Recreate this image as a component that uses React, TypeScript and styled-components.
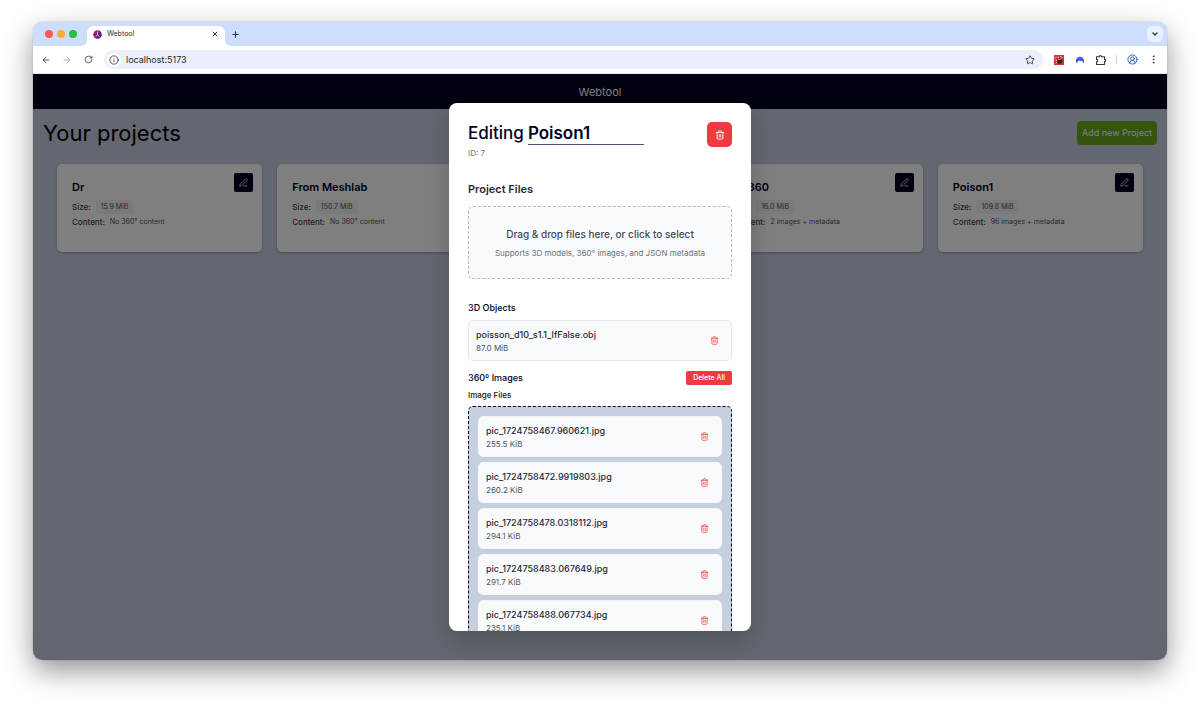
import React from 'react';
import styled, { createGlobalStyle } from 'styled-components';
import {
  ArrowLeft,
  ArrowRight,
  ChevronDown,
  CircleUserRound,
  EllipsisVertical,
  Info,
  PenLine,
  Plus,
  RotateCw,
  Star,
  Trash2,
  X,
} from 'lucide-react';

const navy = '#000122';
const slate = '#c6cfde';
const red = '#ef3b3f';

const GlobalStyle = createGlobalStyle`
  *, *::before, *::after { box-sizing: border-box; }
  body {
    margin: 0;
    background: #fff;
    color: #1f2937;
    font-family: Inter, "Liberation Sans", sans-serif;
  }
  button, input { font-family: inherit; }
  h1, h2, h3, h4, p, ul, dl, dd { margin: 0; padding: 0; }
  ul { list-style: none; }
`;

/* Browser window */

const Desktop = styled.div`
  display: flex;
  min-height: 100vh;
  padding: 22px 33px 44px;
`;

const BrowserWindow = styled.div`
  flex: 1;
  min-width: 0;
  display: flex;
  flex-direction: column;
  overflow: hidden;
  border-radius: 9px;
  background: #fff;
  box-shadow: 0 0 1px rgba(0, 0, 0, 0.5), 0 11px 28px rgba(0, 0, 0, 0.42);
`;

const TabStrip = styled.div`
  display: flex;
  align-items: center;
  height: 24px;
  padding: 0 4px 0 12px;
  background: #ccddfe;
`;

const TrafficLights = styled.div`
  display: flex;
  gap: 4px;
  margin-right: 10px;
`;

const Light = styled.span<{ $color: string }>`
  width: 8px;
  height: 8px;
  border-radius: 50%;
  background: ${(p) => p.$color};
`;

const Tab = styled.div`
  position: relative;
  align-self: flex-end;
  display: flex;
  align-items: center;
  gap: 5px;
  width: 138px;
  height: 20px;
  padding: 0 6px 4px;
  border-radius: 7px 7px 0 0;
  background: #fff;

  &::before,
  &::after {
    content: '';
    position: absolute;
    bottom: 0;
    width: 6px;
    height: 6px;
  }
  &::before {
    right: 100%;
    background: radial-gradient(circle at 0 0, transparent 6px, #fff 6px);
  }
  &::after {
    left: 100%;
    background: radial-gradient(circle at 100% 0, transparent 6px, #fff 6px);
  }
`;

const TabTitle = styled.span`
  flex: 1;
  font-size: 7px;
  line-height: 10px;
  color: #26282c;
`;

const ChromeButton = styled.button<{ $size?: number; $tint?: string }>`
  display: inline-flex;
  align-items: center;
  justify-content: center;
  flex: none;
  width: ${(p) => p.$size ?? 12}px;
  height: ${(p) => p.$size ?? 12}px;
  padding: 0;
  border: 0;
  border-radius: 5px;
  background: ${(p) => p.$tint ?? 'transparent'};
  color: #33363b;
`;

const NewTab = styled(ChromeButton)`
  margin-left: 4px;
  margin-right: auto;
`;

const Toolbar = styled.div`
  display: flex;
  align-items: center;
  gap: 10px;
  height: 28px;
  padding: 0 8px 0 7px;
  border-bottom: 1px solid #e3e8f0;
  background: #fff;
`;

const ToolbarGroup = styled.div`
  display: flex;
  align-items: center;
  gap: 9px;
`;

const AddressBar = styled.div`
  flex: 1;
  display: flex;
  align-items: center;
  gap: 5px;
  height: 19px;
  padding: 0 7px 0 3px;
  border-radius: 10px;
  background: #eaeffb;
`;

const SiteInfo = styled(ChromeButton)`
  border-radius: 50%;
`;

const Address = styled.input`
  flex: 1;
  min-width: 0;
  padding: 0;
  border: 0;
  outline: 0;
  background: transparent;
  color: #26282c;
  font-size: 9px;
  line-height: 12px;
`;

const Divider = styled.span`
  width: 1px;
  height: 9px;
  background: #c3d7f7;
`;

/* Page */

const Viewport = styled.div`
  position: relative;
  flex: 1;
  display: flex;
  flex-direction: column;
  background: ${slate};
`;

const SiteHeader = styled.header`
  display: flex;
  align-items: center;
  justify-content: center;
  height: 35px;
  background: ${navy};
`;

const SiteLink = styled.a`
  color: #fff;
  font-size: 11px;
  line-height: 16px;
  text-decoration: none;
`;

const Main = styled.main`
  padding: 12px 10px;
`;

const PageBar = styled.div`
  display: flex;
  align-items: center;
  justify-content: space-between;
  margin-bottom: 19px;
`;

const PageTitle = styled.h1`
  font-size: 22px;
  font-weight: 400;
  line-height: 24px;
  color: #000;
`;

const AddButton = styled.button`
  height: 24px;
  padding: 0 5px;
  border: 0;
  border-radius: 4px;
  background: #6aa81c;
  color: #fff;
  font-size: 9px;
  line-height: 14px;
`;

const ProjectGrid = styled.ul`
  display: grid;
  grid-template-columns: repeat(5, minmax(0, 1fr));
  gap: 15px;
  padding: 0 14px;
`;

const Card = styled.li`
  display: flex;
  align-items: flex-start;
  justify-content: space-between;
  height: 88px;
  padding: 9px 9px 9px 15px;
  border-radius: 5px;
  background: #fff;
  box-shadow: 0 1px 3px rgba(0, 0, 0, 0.25);
`;

const CardTitle = styled.h2`
  margin: 6px 0 5px;
  color: ${navy};
  font-size: 11px;
  font-weight: 600;
  line-height: 16px;
`;

const Fact = styled.div`
  display: flex;
  align-items: center;
  gap: 5px;
  height: 13px;
  margin-bottom: 2px;
  font-size: 8px;
  line-height: 12px;
  white-space: nowrap;
`;

const FactLabel = styled.dt`
  color: #374151;
  font-weight: 500;
`;

const FactValue = styled.dd<{ $badge?: boolean }>`
  padding: ${(p) => (p.$badge ? '1px 5px' : '0')};
  border-radius: 3px;
  background: ${(p) => (p.$badge ? '#f3f4f6' : 'transparent')};
  color: #4b5563;
  font-size: 7px;
`;

const EditButton = styled.button`
  display: flex;
  align-items: center;
  justify-content: center;
  width: 19px;
  height: 19px;
  padding: 0;
  border: 0;
  border-radius: 2px;
  background: ${navy};
  color: #fff;
`;

/* Dialog */

const Backdrop = styled.div`
  position: absolute;
  inset: 0;
  display: flex;
  align-items: center;
  justify-content: center;
  background: rgba(0, 0, 0, 0.5);
`;

const Dialog = styled.section`
  width: 302px;
  max-width: 90%;
  max-height: 90%;
  overflow-y: auto;
  scrollbar-width: none;
  padding: 19px;
  border-radius: 8px;
  background: #fff;
  box-shadow: 0 10px 26px rgba(0, 0, 0, 0.2);
`;

const DialogHead = styled.div`
  display: flex;
  align-items: flex-start;
  justify-content: space-between;
`;

const DialogTitle = styled.h2`
  display: flex;
  gap: 4px;
  color: ${navy};
  font-size: 17px;
  font-weight: 500;
  line-height: 22px;
`;

const NameInput = styled.input`
  width: 116px;
  height: 23px;
  padding: 0;
  border: 0;
  border-bottom: 1px solid #4d5169;
  outline: 0;
  background: transparent;
  color: ${navy};
  font-size: 17px;
  font-weight: 600;
  line-height: 22px;
`;

const ProjectId = styled.p`
  margin-top: 2px;
  color: #6b7280;
  font-size: 8px;
  line-height: 12px;
`;

const DeleteProject = styled.button`
  display: flex;
  align-items: center;
  justify-content: center;
  width: 25px;
  height: 25px;
  padding: 0;
  border: 0;
  border-radius: 5px;
  background: ${red};
  color: #fff;
`;

const SectionTitle = styled.h3`
  margin: 22px 0 9px;
  color: #1f2937;
  font-size: 11px;
  font-weight: 600;
  line-height: 16px;
`;

const DropZone = styled.label`
  display: flex;
  flex-direction: column;
  align-items: center;
  gap: 5px;
  padding: 19px 8px;
  border: 1px dashed #b4b8be;
  border-radius: 5px;
  background: #f9fafb;
  text-align: center;
`;

const HiddenFile = styled.input`
  position: absolute;
  width: 1px;
  height: 1px;
  opacity: 0;
`;

const DropTitle = styled.span`
  color: #414b5a;
  font-size: 10px;
  font-weight: 500;
  line-height: 16px;
`;

const DropHint = styled.span`
  color: #6b7280;
  font-size: 8px;
  line-height: 12px;
`;

const GroupHead = styled.div<{ $top: number }>`
  display: flex;
  align-items: center;
  justify-content: space-between;
  height: 14px;
  margin-top: ${(p) => p.$top}px;
`;

const GroupTitle = styled.h4`
  color: ${navy};
  font-size: 9px;
  font-weight: 500;
  line-height: 14px;
`;

const DeleteAll = styled.button`
  height: 14px;
  padding: 0 7px;
  border: 0;
  border-radius: 2px;
  background: ${red};
  color: #fff;
  font-size: 7px;
  font-weight: 500;
  line-height: 10px;
`;

const ListLabel = styled.p`
  margin: 4px 0 5px;
  color: #111827;
  font-size: 8px;
  font-weight: 500;
  line-height: 12px;
`;

const FileList = styled.ul<{ $framed?: boolean }>`
  display: flex;
  flex-direction: column;
  gap: 5px;
  margin-top: ${(p) => (p.$framed ? 0 : 5)}px;
  padding: ${(p) => (p.$framed ? 9 : 0)}px;
  border: ${(p) => (p.$framed ? `1px dashed ${navy}` : '0')};
  border-radius: 5px;
  background: ${(p) => (p.$framed ? slate : 'transparent')};
`;

const FileRow = styled.li<{ $outlined?: boolean }>`
  display: flex;
  align-items: center;
  justify-content: space-between;
  height: 41px;
  padding: 0 12px 0 7px;
  border: 1px solid ${(p) => (p.$outlined ? '#e5e7eb' : '#f3f5f8')};
  border-radius: 5px;
  background: #f9fafb;
`;

const FileName = styled.p`
  color: #1f2937;
  font-size: 9px;
  font-weight: 500;
  line-height: 14px;
`;

const FileSize = styled.p`
  color: #4b5563;
  font-size: 8px;
  line-height: 12px;
`;

const RemoveFile = styled.button`
  display: flex;
  padding: 0;
  border: 0;
  background: transparent;
  color: ${red};
`;

const Favicon = () => (
  <svg width="9" height="9" viewBox="0 0 18 18" aria-hidden="true">
    <defs>
      <linearGradient id="fav" x1="0" y1="0" x2="1" y2="1">
        <stop offset="0" stopColor="#e0184c" />
        <stop offset="0.5" stopColor="#7a1a7c" />
        <stop offset="1" stopColor="#3a17b0" />
      </linearGradient>
    </defs>
    <circle cx="9" cy="9" r="8.6" fill="url(#fav)" />
    <path d="M9 3v7M9 10l-4 3M9 10l4 3" stroke="#e9c3ea" strokeWidth="1.8" fill="none" />
  </svg>
);

const RedExtension = () => (
  <svg width="10" height="10" viewBox="0 0 20 20" aria-hidden="true">
    <rect width="20" height="20" rx="1" fill="#c8392f" />
    <path d="M2 6l3-2M7 4l3 1M13 3l4 2M3 10l3 1M3 16l3-2" stroke="#f3c9bd" strokeWidth="2" />
    <path d="M7 9l4-3 5 2 1 6-5 4-5-2z" fill="#4a1512" />
    <path d="M8 8l3 1 4-2" stroke="#f3c9bd" strokeWidth="1.5" fill="none" />
  </svg>
);

const BlueExtension = () => (
  <svg width="10" height="10" viewBox="0 0 20 20" aria-hidden="true">
    <path
      d="M3.500 17C-1 9 5 3.500 10 3.500S21 9 16.500 17C15.500 14 14.500 11.500 12.500 11.500C11.500 11.500 11 12 10.500 12.500C9.500 11 8.500 10.500 7.500 11.500C5.500 13 5 15 3.500 17Z"
      fill="#3e5fe0"
    />
  </svg>
);

const ExtensionsIcon = () => (
  <svg
    width="12"
    height="12"
    viewBox="0 0 24 24"
    fill="none"
    stroke="currentColor"
    strokeWidth="2.2"
    strokeLinejoin="round"
    aria-hidden="true"
  >
    <path d="M3 5.500h5.500a2.300 2.300 0 0 1 4.600 0H19v5.200a2.300 2.300 0 0 1 0 4.600V21H3v-5.200a2.500 2.500 0 0 0 0-5z" />
  </svg>
);

interface Project {
  name: string;
  size: string;
  content: string;
}

/* A null entry is a card that has no project loaded yet. */
const projects: (Project | null)[] = [
  { name: 'Dr', size: '15.9 MiB', content: 'No 360° content' },
  { name: 'From Meshlab', size: '150.7 MiB', content: 'No 360° content' },
  null,
  { name: 'Dr 360', size: '16.0 MiB', content: '2 images + metadata' },
  { name: 'Poison1', size: '109.8 MiB', content: '96 images + metadata' },
];

interface StoredFile {
  name: string;
  size: string;
}

const objects: StoredFile[] = [{ name: 'poisson_d10_s1.1_lfFalse.obj', size: '87.0 MiB' }];

const images: StoredFile[] = [
  { name: 'pic_1724758467.960621.jpg', size: '255.5 KiB' },
  { name: 'pic_1724758472.9919803.jpg', size: '260.2 KiB' },
  { name: 'pic_1724758478.0318112.jpg', size: '294.1 KiB' },
  { name: 'pic_1724758483.067649.jpg', size: '291.7 KiB' },
  { name: 'pic_1724758488.067734.jpg', size: '235.1 KiB' },
];

const Files = ({ files, framed }: { files: StoredFile[]; framed?: boolean }) => (
  <FileList $framed={framed}>
    {files.map((file) => (
      <FileRow key={file.name} $outlined={!framed}>
        <div>
          <FileName>{file.name}</FileName>
          <FileSize>{file.size}</FileSize>
        </div>
        <RemoveFile aria-label={`Delete ${file.name}`}>
          <Trash2 size={9} strokeWidth={2} />
        </RemoveFile>
      </FileRow>
    ))}
  </FileList>
);

const ProjectCard = ({ project }: { project: Project | null }) => (
  <Card>
    {project && (
      <>
        <div>
          <CardTitle>{project.name}</CardTitle>
          <dl>
            <Fact>
              <FactLabel>Size:</FactLabel>
              <FactValue $badge>{project.size}</FactValue>
            </Fact>
            <Fact>
              <FactLabel>Content:</FactLabel>
              <FactValue>{project.content}</FactValue>
            </Fact>
          </dl>
        </div>
        <EditButton aria-label={`Edit ${project.name}`}>
          <PenLine size={9} />
        </EditButton>
      </>
    )}
  </Card>
);

const BrowserChrome = () => (
  <>
    <TabStrip>
      <TrafficLights>
        <Light $color="#fb5a50" />
        <Light $color="#fbae2c" />
        <Light $color="#26bf3c" />
      </TrafficLights>
      <Tab>
        <Favicon />
        <TabTitle>Webtool</TabTitle>
        <ChromeButton $size={8} aria-label="Close tab">
          <X size={8} strokeWidth={3} />
        </ChromeButton>
      </Tab>
      <NewTab aria-label="New tab">
        <Plus size={9} strokeWidth={3} />
      </NewTab>
      <ChromeButton $size={16} $tint="#e9f0ff" aria-label="Search tabs">
        <ChevronDown size={8} strokeWidth={4} />
      </ChromeButton>
    </TabStrip>
    <Toolbar>
      <ToolbarGroup>
        <ChromeButton aria-label="Back">
          <ArrowLeft size={10} />
        </ChromeButton>
        <ChromeButton aria-label="Forward">
          <ArrowRight size={10} color="#a3a6ab" />
        </ChromeButton>
        <ChromeButton aria-label="Reload">
          <RotateCw size={9} strokeWidth={2} />
        </ChromeButton>
      </ToolbarGroup>
      <AddressBar>
        <SiteInfo $size={14} $tint="#fff" aria-label="Site information">
          <Info size={10} />
        </SiteInfo>
        <Address aria-label="Address" defaultValue="localhost:5173" />
        <ChromeButton aria-label="Bookmark">
          <Star size={10} strokeWidth={2} />
        </ChromeButton>
      </AddressBar>
      <ToolbarGroup>
        <ChromeButton aria-label="Extension">
          <RedExtension />
        </ChromeButton>
        <ChromeButton aria-label="VPN extension">
          <BlueExtension />
        </ChromeButton>
        <ChromeButton aria-label="Extensions">
          <ExtensionsIcon />
        </ChromeButton>
        <Divider />
        <ChromeButton aria-label="Profile">
          <CircleUserRound size={11} color="#2458b8" strokeWidth={2} />
        </ChromeButton>
        <ChromeButton aria-label="Menu">
          <EllipsisVertical size={11} />
        </ChromeButton>
      </ToolbarGroup>
    </Toolbar>
  </>
);

const EditDialog = () => (
  <Backdrop>
    <Dialog role="dialog" aria-modal="true" aria-label="Edit project">
      <DialogHead>
        <div>
          <DialogTitle>
            Editing
            <NameInput aria-label="Project name" defaultValue="Poison1" />
          </DialogTitle>
          <ProjectId>ID: 7</ProjectId>
        </div>
        <DeleteProject aria-label="Delete project">
          <Trash2 size={10} />
        </DeleteProject>
      </DialogHead>

      <SectionTitle>Project Files</SectionTitle>
      <DropZone>
        <HiddenFile type="file" multiple />
        <DropTitle>Drag &amp; drop files here, or click to select</DropTitle>
        <DropHint>Supports 3D models, 360° images, and JSON metadata</DropHint>
      </DropZone>

      <GroupHead $top={22}>
        <GroupTitle>3D Objects</GroupTitle>
      </GroupHead>
      <Files files={objects} />

      <GroupHead $top={10}>
        <GroupTitle>360º Images</GroupTitle>
        <DeleteAll>Delete All</DeleteAll>
      </GroupHead>
      <ListLabel>Image Files</ListLabel>
      <Files files={images} framed />
    </Dialog>
  </Backdrop>
);

export default function App() {
  return (
    <>
      <GlobalStyle />
      <Desktop>
        <BrowserWindow>
          <BrowserChrome />
          <Viewport>
            <SiteHeader>
              <SiteLink href="#">Webtool</SiteLink>
            </SiteHeader>
            <Main>
              <PageBar>
                <PageTitle>Your projects</PageTitle>
                <AddButton>Add new Project</AddButton>
              </PageBar>
              <ProjectGrid>
                {projects.map((project, index) => (
                  <ProjectCard key={index} project={project} />
                ))}
              </ProjectGrid>
            </Main>
            <EditDialog />
          </Viewport>
        </BrowserWindow>
      </Desktop>
    </>
  );
}
